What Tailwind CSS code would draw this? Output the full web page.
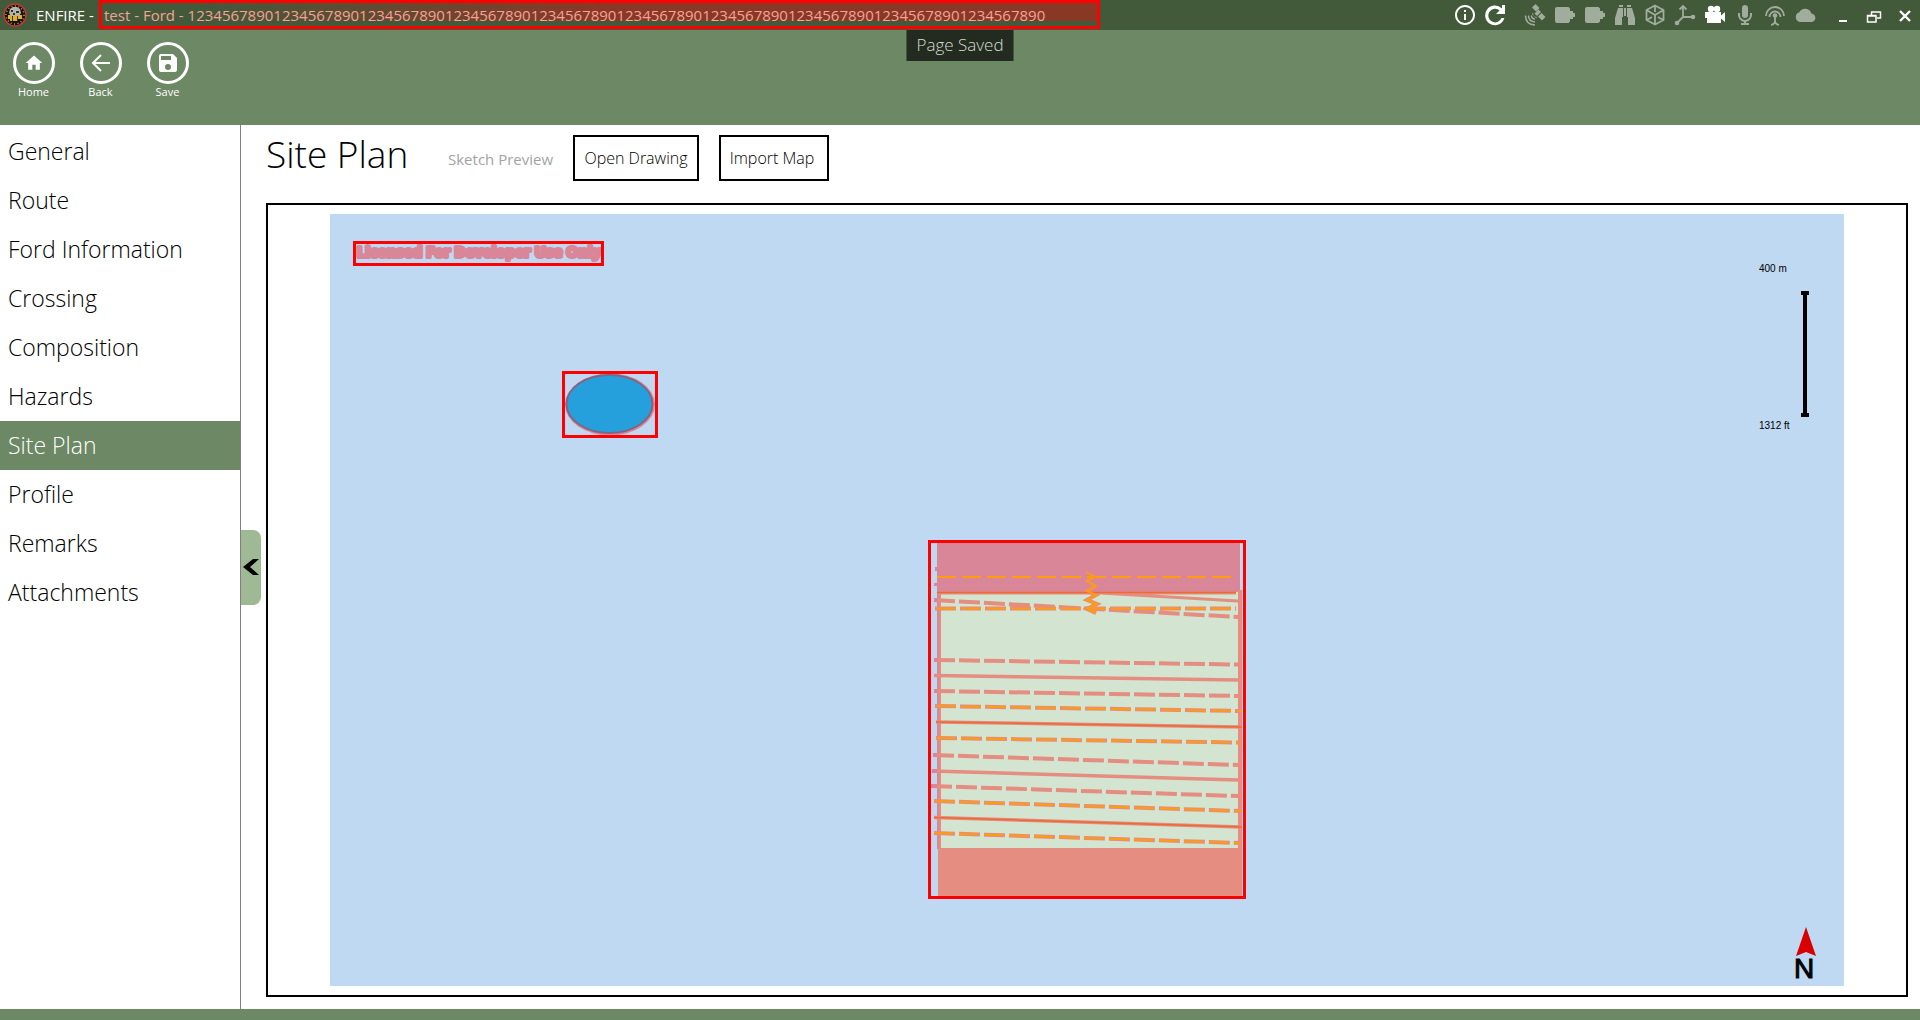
<!DOCTYPE html>
<html lang="en">
<head>
<meta charset="utf-8">
<meta name="viewport" content="width=device-width, initial-scale=1">
<title>ENFIRE - Site Plan</title>
<script src="https://cdn.jsdelivr.net/npm/@tailwindcss/browser@4"></script>
</head>
<body class="relative flex h-screen flex-col overflow-hidden bg-white font-['Open_Sans','Segoe_UI',sans-serif] font-light text-black">

<!-- Title bar -->
<div class="flex h-[30px] shrink-0 items-center bg-[#42593a] text-[15px] text-white">
  <svg class="ml-[3px] size-6 shrink-0" viewBox="0 0 24 24" aria-hidden="true">
    <circle cx="12" cy="12" r="11" fill="#171310" stroke="#c23a30" stroke-width="1.5"/>
    <circle cx="12" cy="12" r="9" fill="none" stroke="#b9a58a" stroke-width="1.5" stroke-dasharray="1 2.5"/>
    <path d="M6 10l1-4 3-2h4l3 2 1 4-2 3H8z" fill="#b5b5ac"/>
    <path d="M8 7h2v2H8zM13 8h3v2h-3zM10 10h2v2h-2z" fill="#3b302b"/>
    <path d="M5 12h4v4H5zM10 13h4v5h-4zM15 12h4v4h-4zM7 16h3v2H7z" fill="#d8b62c"/>
    <path d="M9 14h1v4H9zM14 13h1v5h-1z" fill="#6d2018"/>
  </svg>
  <span class="ml-[9px] w-[63px] shrink-0 pt-px font-normal whitespace-pre">ENFIRE -</span>
  <div class="flex h-[29px] w-[1001px] items-center self-start border-3 border-[#ff0000] bg-linear-to-b from-[#8a3826] from-80% to-[#42593a] to-80% whitespace-pre text-[#f5a297]">
    <span class="flex h-full w-full items-center bg-linear-to-r from-[#42593a] from-10% to-transparent to-50%"><span class="pt-0.5 pl-0.5 font-normal">test - Ford - 1234567890123456789012345678901234567890123456789012345678901234567890123456789012345678901234567890</span></span>
  </div>
  <div class="ml-auto flex items-center gap-1.5 fill-current">
    <svg class="size-6" viewBox="0 0 24 24"><path d="M11 17h2v-6h-2v6zm1-15C6.480 2 2 6.480 2 12s4.480 10 10 10 10-4.480 10-10S17.520 2 12 2zm0 18c-4.410 0-8-3.590-8-8s3.590-8 8-8 8 3.590 8 8-3.590 8-8 8zM11 9h2V7h-2v2z"/></svg>
    <svg class="size-6" viewBox="0 0 24 24"><path d="M19 5V2h3v9h-9l3.600-3.600A6.800 6.800 0 1 0 18.500 15h2.900A9.800 9.800 0 1 1 18.700 5.200z"/></svg>
    <div class="ml-2.5 flex items-center gap-1.5 text-[#a0ac9c]">
      <svg class="size-6" viewBox="0 0 24 24"><path d="M9 4.500L12.500 1l4 4-3.500 3.500zM15 13.500l3.500-3.500 4 4-3.500 3.500zM11.500 10.500l4-4 2.500 2.500-4 4zM10 9.500q0 4.500 4.500 4.500l-1.500 1-4-4z"/><path d="M8.500 12.500q0 3.500 3.500 3.500M5.500 12.500q0 6 6.500 6.500M2.500 12.500q0 9 9.500 9.500" fill="none" stroke="currentColor" stroke-width="1.500"/></svg>
      <svg class="size-6" viewBox="0 0 24 24"><path d="M4 4h11.500l1.500 1.500V8h3v2h2v4h-2v2h-3v2.500L15.500 20H4q-2 0-2-2V6q0-2 2-2z"/></svg>
      <svg class="size-6" viewBox="0 0 24 24"><path d="M4 4h11.500l1.500 1.500V8h3v2h2v4h-2v2h-3v2.500L15.500 20H4q-2 0-2-2V6q0-2 2-2z"/></svg>
      <svg class="size-6" viewBox="0 0 24 24"><path d="M6 2h4v2H6zM14 2h4v2h-4zM5 5h5v9h-1v8H2v-7zM14 5h5l3 10v7h-7v-8h-1zM11 5h2v8h-2z"/></svg>
      <svg class="size-6" viewBox="0 0 24 24"><path d="M12 2.500l8.500 4.500v10L12 21.500 3.500 17V7zM3.500 7L12 12l8.500-5M12 12v9.500M12 3v6M4 17l5-3M20 17l-5-3" fill="none" stroke="currentColor" stroke-width="1.800"/></svg>
      <svg class="size-6" viewBox="0 0 24 24"><path d="M10 4v10h10M10 14l-6 6M6.500 6.500L10 3l3.500 3.500" fill="none" stroke="currentColor" stroke-width="1.800"/><circle cx="20" cy="14" r="2.300"/><circle cx="4" cy="20" r="2.300"/></svg>
      <svg class="size-6 text-white" viewBox="0 0 24 24"><path d="M2 9h16v3.500l4-3.500v10l-4-3.500V20H4v-5H2z"/><circle cx="8" cy="6" r="3.200"/><circle cx="14" cy="6" r="3.200"/></svg>
      <svg class="size-6" viewBox="0 0 24 24"><path d="M12 2a3 3 0 0 0-3 3v7a3 3 0 0 0 6 0V5a3 3 0 0 0-3-3zM5 10h2v2a5 5 0 0 0 10 0v-2h2v2a7 7 0 0 1-6 6.900V20h3v2H8v-2h3v-1.100A7 7 0 0 1 5 12z"/></svg>
      <svg class="size-6" viewBox="0 0 24 24"><path d="M3 13a9 9 0 1 1 18 0M6.500 14a5.500 5.500 0 1 1 11 0M12 13v5M8 22q4-1 4-4 0 3 4 4" fill="none" stroke="currentColor" stroke-width="1.800"/><circle cx="12" cy="12.500" r="2.300"/></svg>
      <svg class="size-6" viewBox="0 0 24 24"><path d="M18.400 10.600A6.500 6.500 0 0 0 6.300 9.300 5 5 0 0 0 7 19h11a4.200 4.200 0 0 0 .4-8.400z"/></svg>
    </div>
  </div>
  <div class="mr-[3px] ml-[14px] flex items-center gap-[7px]">
    <button class="grid size-6 place-items-center" aria-label="Minimize"><svg class="size-6" viewBox="0 0 24 24"><path d="M8 17h8v2H8z" fill="#fff"/></svg></button>
    <button class="grid size-6 place-items-center" aria-label="Restore"><svg class="size-6" viewBox="0 0 24 24"><path d="M9.500 12V9h9v6H15M5.500 12.500H14V19H5.500zM9 9h10M5 13h9" fill="none" stroke="#fff" stroke-width="1.500"/></svg></button>
    <button class="grid size-6 place-items-center" aria-label="Close"><svg class="size-6" viewBox="0 0 24 24"><path d="M7 8l10 10M17 8L7 18" fill="none" stroke="#fff" stroke-width="2.400"/></svg></button>
  </div>
</div>

<!-- Toolbar -->
<header class="flex h-[95px] shrink-0 bg-[#6d8865] pt-3 text-[11px]/4 font-normal text-white">
  <button class="flex w-[67px] flex-col items-center">
    <span class="grid size-[42px] place-items-center rounded-full border-3 border-white"><svg class="size-5 fill-white" viewBox="0 0 24 24"><path d="M10 20v-6h4v6h5v-8h3L12 3 2 12h3v8z"/></svg></span>Home</button>
  <button class="flex w-[67px] flex-col items-center">
    <span class="grid size-[42px] place-items-center rounded-full border-3 border-white"><svg class="size-6" viewBox="0 0 24 24"><path d="M21 12H4M12 4l-8 8 8 8" fill="none" stroke="#fff" stroke-width="2"/></svg></span>Back</button>
  <button class="flex w-[67px] flex-col items-center">
    <span class="grid size-[42px] place-items-center rounded-full border-3 border-white"><svg class="size-6 fill-white" viewBox="0 0 24 24"><path d="M17 3H5a2 2 0 0 0-2 2v14a2 2 0 0 0 2 2h14a2 2 0 0 0 2-2V7l-4-4zm-5 16a3 3 0 1 1 0-6 3 3 0 0 1 0 6zm3-10H5V5h10v4z"/></svg></span>Save</button>
</header>
<div role="status" class="absolute top-[30px] left-1/2 flex h-[31px] w-[108px] -translate-x-1/2 items-center justify-center border-x border-[#42593a] bg-[#232a20] pb-0.5 text-[17px] text-[#d3ddd0]">Page Saved</div>

<div class="flex min-h-0 flex-1">
  <nav class="w-[241px] shrink-0 border-r border-[#808080] pt-0.5 text-[23px]">
    <a href="#general" class="flex h-[49px] items-center px-2">General</a>
    <a href="#route" class="flex h-[49px] items-center px-2">Route</a>
    <a href="#ford" class="flex h-[49px] items-center px-2">Ford Information</a>
    <a href="#crossing" class="flex h-[49px] items-center px-2">Crossing</a>
    <a href="#composition" class="flex h-[49px] items-center px-2">Composition</a>
    <a href="#hazards" class="flex h-[49px] items-center px-2">Hazards</a>
    <a href="#site-plan" aria-current="page" class="flex h-[49px] items-center bg-[#6d8865] px-2 text-white">Site Plan</a>
    <a href="#profile" class="flex h-[49px] items-center px-2">Profile</a>
    <a href="#remarks" class="flex h-[49px] items-center px-2">Remarks</a>
    <a href="#attachments" class="flex h-[49px] items-center px-2">Attachments</a>
  </nav>
  <button aria-label="Collapse menu" class="grid h-[75px] w-5 shrink-0 place-items-center self-center rounded-r-lg bg-[#a0b995]"><svg class="h-4 w-4" viewBox="0 0 16 16"><path d="M10 0h6L7 8l9 8h-6L0 8z"/></svg></button>

  <main class="mr-3 mb-3 ml-[5px] flex min-w-0 flex-1 flex-col">
    <div class="flex h-[78px] shrink-0 items-start text-base">
      <h1 class="w-[182px] text-[37px]/[58px]">Site Plan</h1>
      <span class="w-[125px] pt-6 text-[15px]/5 font-normal text-[#a3a3a3]">Sketch Preview</span>
      <button class="mt-2.5 mr-5 h-[46px] w-[126px] border-2 border-black">Open Drawing</button>
      <button class="mt-2.5 h-[46px] w-[110px] border-2 border-black pr-1">Import Map</button>
    </div>

    <!-- Sketch canvas -->
    <div class="flex min-h-0 flex-1 border-2 border-black py-[9px]">
      <svg class="h-full w-full" viewBox="330 214 1514 772" role="img" aria-label="Site plan sketch">
        <rect x="330" y="214" width="1514" height="772" fill="#bfd9f2"/>

        <!-- License label -->
        <text x="357" y="257" font-family="Open Sans, sans-serif" font-size="15" font-weight="700" fill="#d98798" stroke="#d98798" stroke-width="4" stroke-linejoin="round">Licensed For Developer Use Only</text>
        <rect x="354.500" y="242.500" width="248" height="22" fill="none" stroke="#f00" stroke-width="3"/>

        <!-- Pond -->
        <ellipse cx="610" cy="404.500" rx="45" ry="31" fill="#d98798"/>
        <ellipse cx="609.500" cy="404" rx="43" ry="29" fill="#26a0dd" stroke="#7f6685" stroke-width="2"/>
        <rect x="563.500" y="372.500" width="93" height="64" fill="none" stroke="#f00" stroke-width="3"/>

        <!-- Ford banks and bed -->
        <rect x="937" y="591" width="303" height="258" fill="#d3e5d0"/>
        <rect x="937" y="543" width="303" height="49" fill="#d98798"/>
        <path d="M935 567h3v4h-3zM934 583h3v3h-3z" fill="#d98798"/>
        <path d="M938 592v257" stroke="#d98798" stroke-width="2"/>
        <path d="M940 592v257" stroke="#e48d80" stroke-width="2"/>
        <path d="M1240 590v259" stroke="#e48d80" stroke-width="4"/>
        <rect x="938" y="848" width="304" height="48" fill="#e48d80"/>

        <!-- Contour casings -->
        <g fill="none" stroke="#e48d80" stroke-width="4">
          <path d="M937 593H1236M1100 593L1238 601" stroke-width="3"/>
          <path d="M934 675.500L1238 680M936 722L1242 727M932 771L1238 780M934 817.500L1242 827" stroke-width="3.500"/>
          <g stroke-dasharray="21 4">
            <path d="M934 600L1238 617M935 608.500H1236M934 660L1238 664.500M934 691L1238 696M935 706L1241 711M936 738L1240 742.500M933 755L1238 765M931 786L1238 796M934 801L1241 811M934 833L1240 843"/>
          </g>
          <path d="M1095 586l-8 5 9 4-9 5 10 4-10 5 9 4"/>
        </g>
        <path d="M933 755h4M932 771h5M931 786h6M934 691h4M934 660h4M934 600h4" stroke="#d98798" stroke-width="4"/>

        <!-- Contours -->
        <path d="M937 592.500H1236M936 722L1242 727M934 817.500L1242 827" fill="none" stroke="#ef6a30" stroke-width="1.500"/>
        <g fill="none" stroke="#ff9c10" stroke-width="2">
          <path d="M937 577H1236M937 608.500H1236M937 706L1241 711M936 738L1240 742.500M935 801L1241 811M934 833L1240 843" stroke-dasharray="19 6"/>
          <path d="M1086 572l9 5-8 4 9 5-9 5 9 4-9 5 10 4-10 5 9 4"/>
        </g>
        <rect x="929.500" y="541.500" width="315" height="356" fill="none" stroke="#f00" stroke-width="3"/>

        <!-- Scale bar -->
        <g font-family="Liberation Sans, Arial, sans-serif" font-weight="400">
          <text x="1759" y="272" font-size="10">400 m</text>
          <text x="1759" y="429" font-size="10">1312 ft</text>
          <text x="1794" y="978" font-size="28" stroke="#000" stroke-width="1">N</text>
        </g>
        <path d="M1801 291h8v4h-2v118h2v4h-8v-4h2V295h-2z"/>

        <!-- North arrow -->
        <path d="M1806 927l10 29-10-4-10 4z" fill="#d80000"/>
      </svg>
    </div>
  </main>
</div>
<footer class="h-[11px] shrink-0 bg-[#6d8865]"></footer>
</body>
</html>
